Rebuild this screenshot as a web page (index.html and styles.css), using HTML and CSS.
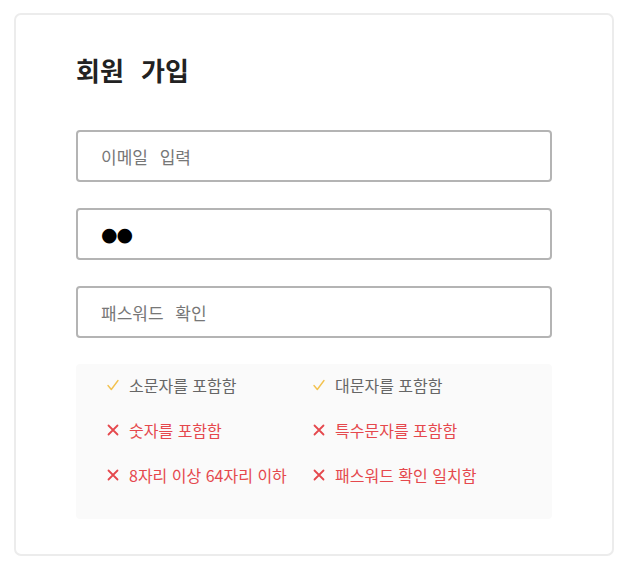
FILE: index.html
```html
<!DOCTYPE html>
<html lang="ko">
<head>
<meta charset="utf-8">
<title>회원 가입</title>
<link rel="stylesheet" href="styles.css">
</head>
<body>
<div class="card">
  <h1 class="title">회원 가입</h1>
  <form class="form">
    <input class="field" type="email" placeholder="이메일 입력">
    <div class="field field-pw">●●</div>
    <input class="field" type="password" placeholder="패스워드 확인">
    <ul class="rules">
      <li class="rule ok"><svg class="ico" viewBox="0 0 12 12"><path d="M1 6.5 L4.3 10.5 L11 1.5"/></svg><span>소문자를 포함함</span></li>
      <li class="rule ok"><svg class="ico" viewBox="0 0 12 12"><path d="M1 6.5 L4.3 10.5 L11 1.5"/></svg><span>대문자를 포함함</span></li>
      <li class="rule bad"><svg class="ico" viewBox="0 0 12 12"><path d="M1.5 1.5 L10.5 10.5 M10.5 1.5 L1.5 10.5"/></svg><span>숫자를 포함함</span></li>
      <li class="rule bad"><svg class="ico" viewBox="0 0 12 12"><path d="M1.5 1.5 L10.5 10.5 M10.5 1.5 L1.5 10.5"/></svg><span>특수문자를 포함함</span></li>
      <li class="rule bad"><svg class="ico" viewBox="0 0 12 12"><path d="M1.5 1.5 L10.5 10.5 M10.5 1.5 L1.5 10.5"/></svg><span>8자리 이상 64자리 이하</span></li>
      <li class="rule bad"><svg class="ico" viewBox="0 0 12 12"><path d="M1.5 1.5 L10.5 10.5 M10.5 1.5 L1.5 10.5"/></svg><span>패스워드 확인 일치함</span></li>
    </ul>
  </form>
</div>
</body>
</html>
```
FILE: styles.css
```css
* { box-sizing: border-box; }
body {
  margin: 0;
  padding: 13px 0 0 14px;
  background: #fff;
  font-family: "Noto Sans CJK KR", "Noto Sans", sans-serif;
}
.card {
  width: 600px;
  height: 543px;
  border: 2px solid #ececec;
  border-radius: 7px;
  padding: 37px 60px 35px 60px;
}
.title {
  margin: 0 0 42px;
  font-size: 26px;
  line-height: 36px;
  font-weight: 700;
  color: #222;
  word-spacing: 10px;
}
.form {
  display: flex;
  flex-direction: column;
  gap: 26px;
  width: 476px;
}
.field {
  display: block;
  width: 100%;
  height: 52px;
  border: 2px solid #b4b4b4;
  border-radius: 4px;
  padding: 0 23px;
  font-family: inherit;
  font-size: 17px;
  color: #000;
  background: #fff;
  outline: none;
  margin: 0;
}
.field::placeholder { color: #777; word-spacing: 7px; }
.field-pw {
  display: flex;
  align-items: center;
  font-size: 19px;
  letter-spacing: -1px;
  font-family: "DejaVu Sans", sans-serif;
}
.rules {
  list-style: none;
  margin: 0;
  padding: 8px 20px 31px 31px;
  background: #fafafa;
  border-radius: 4px;
  display: grid;
  grid-template-columns: 206px 1fr;
  row-gap: 19px;
}
.rule {
  display: flex;
  align-items: center;
  gap: 10px;
  height: 26px;
  font-size: 16px;
  letter-spacing: 0;
}
.ico {
  width: 12px;
  height: 12px;
  flex: none;
  fill: none;
  stroke-linecap: round;
  stroke-linejoin: round;
}
.ok { color: #666; }
.ok .ico { stroke: #f3c24f; stroke-width: 1.4; }
.bad { color: #e5484d; }
.bad .ico { stroke: #e5484d; stroke-width: 1.8; }
```
